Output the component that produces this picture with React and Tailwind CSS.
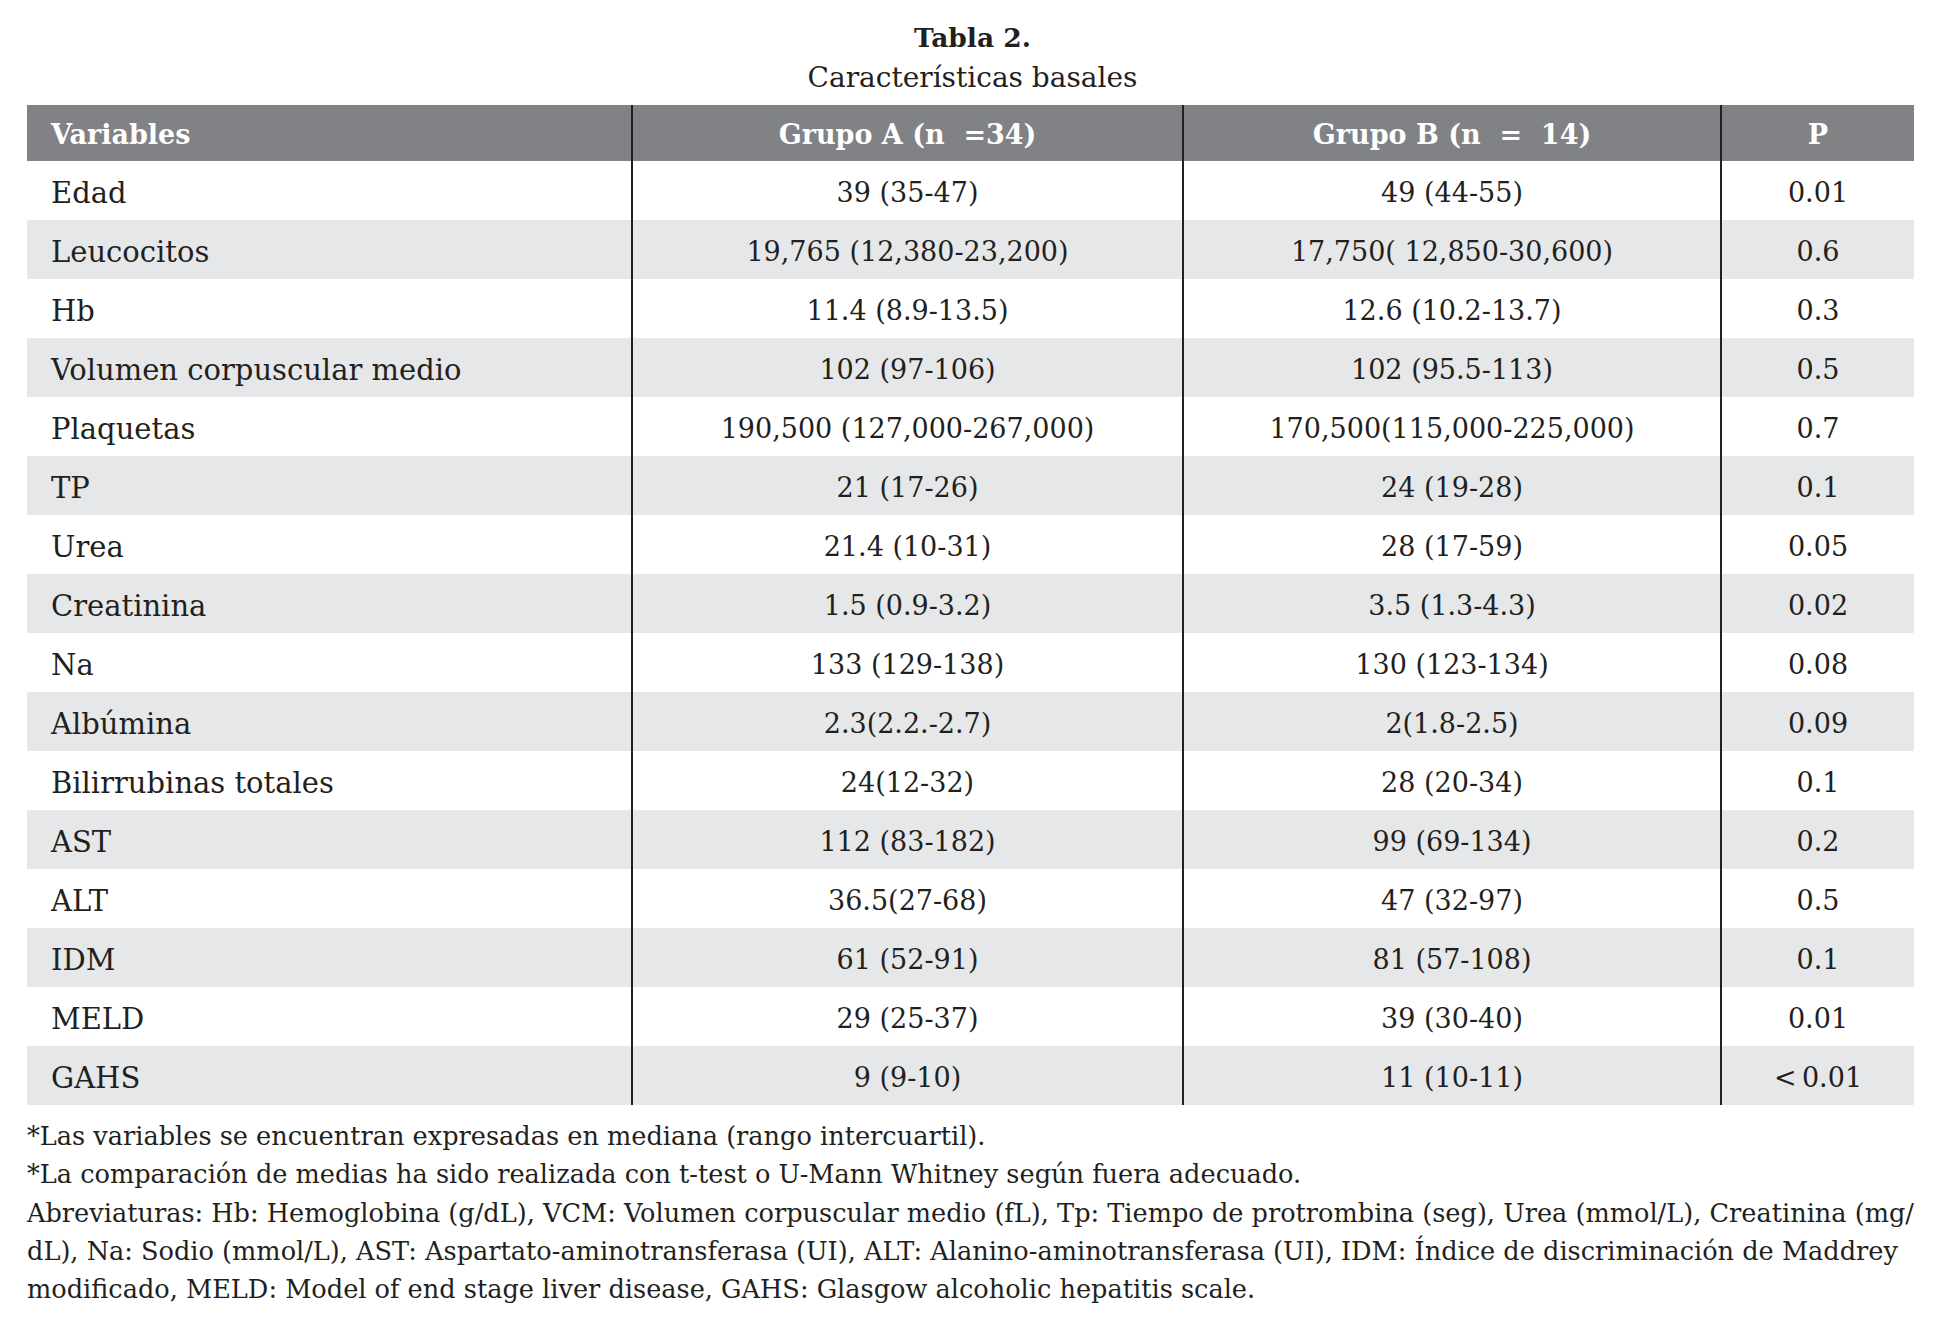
const rows = [
    ['Edad', '39 (35-47)', '49 (44-55)', '0.01'],
    ['Leucocitos', '19,765 (12,380-23,200)', '17,750( 12,850-30,600)', '0.6'],
    ['Hb', '11.4 (8.9-13.5)', '12.6 (10.2-13.7)', '0.3'],
    ['Volumen corpuscular medio', '102 (97-106)', '102 (95.5-113)', '0.5'],
    ['Plaquetas', '190,500 (127,000-267,000)', '170,500(115,000-225,000)', '0.7'],
    ['TP', '21 (17-26)', '24 (19-28)', '0.1'],
    ['Urea', '21.4 (10-31)', '28 (17-59)', '0.05'],
    ['Creatinina', '1.5 (0.9-3.2)', '3.5 (1.3-4.3)', '0.02'],
    ['Na', '133 (129-138)', '130 (123-134)', '0.08'],
    ['Albúmina', '2.3(2.2.-2.7)', '2(1.8-2.5)', '0.09'],
    ['Bilirrubinas totales', '24(12-32)', '28 (20-34)', '0.1'],
    ['AST', '112 (83-182)', '99 (69-134)', '0.2'],
    ['ALT', '36.5(27-68)', '47 (32-97)', '0.5'],
    ['IDM', '61 (52-91)', '81 (57-108)', '0.1'],
    ['MELD', '29 (25-37)', '39 (30-40)', '0.01'],
    ['GAHS', '9 (9-10)', '11 (10-11)', '<\u20090.01'],
]

const notes = [
    '*Las variables se encuentran expresadas en mediana (rango intercuartil).',
    '*La comparación de medias ha sido realizada con t-test o U-Mann Whitney según fuera adecuado.',
    'Abreviaturas: Hb: Hemoglobina (g/dL), VCM: Volumen corpuscular medio (fL), Tp: Tiempo de protrombina (seg), Urea (mmol/L), Creatinina (mg/',
    'dL), Na: Sodio (mmol/L), AST: Aspartato-aminotransferasa (UI), ALT: Alanino-aminotransferasa (UI), IDM: Índice de discriminación de Maddrey',
    'modificado, MELD: Model of end stage liver disease, GAHS: Glasgow alcoholic hepatitis scale.',
]

const grid = 'grid grid-cols-[604px_551px_538px_194px]'

export default function App() {
    return (
        <div className="w-[1945px] h-[1329px] bg-white text-[#231f20] font-['DejaVu_Serif',serif]">
            <div className="pt-[18px] text-center">
                <div className="text-[26.5px] font-bold leading-[40px]">Tabla 2.</div>
                <div className="text-[28px] leading-[40px]">Características basales</div>
            </div>

            <div className="w-[1887px] ml-[27px] mt-[7px]">
                <div className={`${grid} h-[56px] bg-[#808285] text-white text-[27px] font-bold`}>
                    <div className="flex items-center pl-[24px] pt-[4px]">Variables</div>
                    <div className="flex items-center justify-center pt-[4px] border-l-2 border-[#231f20] whitespace-pre">Grupo A (n  =34)</div>
                    <div className="flex items-center justify-center pt-[4px] border-l-2 border-[#231f20] whitespace-pre">Grupo B (n  =  14)</div>
                    <div className="flex items-center justify-center pt-[4px] border-l-2 border-[#231f20]">P</div>
                </div>
                {rows.map((r, i) => (
                    <div
                        key={r[0]}
                        className={`${grid} h-[59px] ${i % 2 === 1 ? 'bg-[#e6e7e8]' : 'bg-white'}`}
                    >
                        <div className="flex items-center pl-[24px] pt-[6px] text-[29px]">{r[0]}</div>
                        <div className="flex items-center justify-center pt-[6px] text-[27px] border-l-2 border-[#231f20]">{r[1]}</div>
                        <div className="flex items-center justify-center pt-[6px] text-[27px] border-l-2 border-[#231f20]">{r[2]}</div>
                        <div className="flex items-center justify-center pt-[6px] text-[27px] border-l-2 border-[#231f20]">{r[3]}</div>
                    </div>
                ))}
            </div>

            <div className="mx-[27px] mt-[12px] text-[25.6px] leading-[38.3px]">
                {notes.map(n => (
                    <div key={n} className="whitespace-nowrap">{n}</div>
                ))}
            </div>
        </div>
    )
}
